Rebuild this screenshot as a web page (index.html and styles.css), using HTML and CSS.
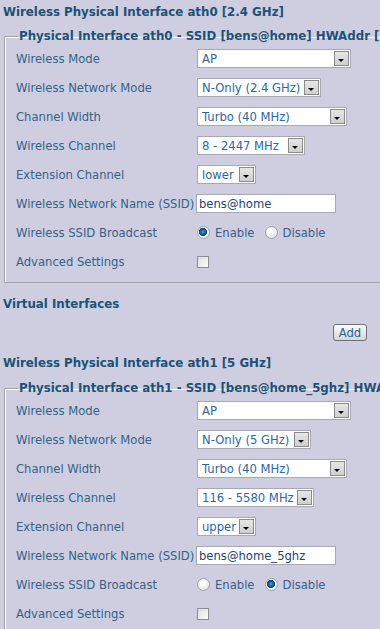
FILE: index.html
```html
<!DOCTYPE html>
<html lang="en">
<head>
    <meta charset="UTF-8">
    <meta name="viewport" content="width=device-width, initial-scale=1.0">
    <title>Wireless Physical Interface</title>
    <link rel="stylesheet" href="styles.css">
</head>
<body>
    <div class="page">
        <!-- ath0 -->
        <h2 class="section-title">Wireless Physical Interface ath0 [2.4 GHz]</h2>
        <fieldset class="iface">
            <legend>Physical Interface ath0 - SSID [bens@home] HWAddr [6C:B0:CE:1A:2F:40]</legend>
            <div class="row">
                <label>Wireless Mode</label>
                <div class="select w-mode"><select><option>AP</option></select><span class="arrow"></span></div>
            </div>
            <div class="row">
                <label>Wireless Network Mode</label>
                <div class="select w-net"><select><option>N-Only (2.4 GHz)</option></select><span class="arrow"></span></div>
            </div>
            <div class="row">
                <label>Channel Width</label>
                <div class="select w-width"><select><option>Turbo (40 MHz)</option></select><span class="arrow"></span></div>
            </div>
            <div class="row">
                <label>Wireless Channel</label>
                <div class="select w-chan"><select><option>8 - 2447 MHz</option></select><span class="arrow"></span></div>
            </div>
            <div class="row">
                <label>Extension Channel</label>
                <div class="select w-ext"><select><option>lower</option></select><span class="arrow"></span></div>
            </div>
            <div class="row">
                <label>Wireless Network Name (SSID)</label>
                <input type="text" class="text" value="bens@home">
            </div>
            <div class="row">
                <label>Wireless SSID Broadcast</label>
                <div class="radios">
                    <input type="radio" name="b0" checked><span>Enable</span>
                    <input type="radio" name="b0"><span>Disable</span>
                </div>
            </div>
            <div class="row">
                <label>Advanced Settings</label>
                <input type="checkbox" class="check">
            </div>
        </fieldset>

        <h2 class="section-title virtual">Virtual Interfaces</h2>
        <div class="add-row"><button class="btn">Add</button></div>

        <!-- ath1 -->
        <h2 class="section-title">Wireless Physical Interface ath1 [5 GHz]</h2>
        <fieldset class="iface second">
            <legend>Physical Interface ath1 - SSID [bens@home_5ghz] HWAddr [6C:B0:CE:1A:2F:41]</legend>
            <div class="row">
                <label>Wireless Mode</label>
                <div class="select w-mode"><select><option>AP</option></select><span class="arrow"></span></div>
            </div>
            <div class="row">
                <label>Wireless Network Mode</label>
                <div class="select w-net5"><select><option>N-Only (5 GHz)</option></select><span class="arrow"></span></div>
            </div>
            <div class="row">
                <label>Channel Width</label>
                <div class="select w-width"><select><option>Turbo (40 MHz)</option></select><span class="arrow"></span></div>
            </div>
            <div class="row">
                <label>Wireless Channel</label>
                <div class="select w-chan5"><select><option>116 - 5580 MHz</option></select><span class="arrow"></span></div>
            </div>
            <div class="row">
                <label>Extension Channel</label>
                <div class="select w-ext"><select><option>upper</option></select><span class="arrow"></span></div>
            </div>
            <div class="row">
                <label>Wireless Network Name (SSID)</label>
                <input type="text" class="text" value="bens@home_5ghz">
            </div>
            <div class="row">
                <label>Wireless SSID Broadcast</label>
                <div class="radios">
                    <input type="radio" name="b1"><span>Enable</span>
                    <input type="radio" name="b1" checked><span>Disable</span>
                </div>
            </div>
            <div class="row">
                <label>Advanced Settings</label>
                <input type="checkbox" class="check">
            </div>
        </fieldset>
    </div>
</body>
</html>
```

FILE: styles.css
```css
html, body {
    margin: 0;
    overflow: hidden;
}
body {
    background-color: #cecee0;
    font-family: "DejaVu Sans", Verdana, sans-serif;
    font-size: 11.6px;
    color: #33628a;
}
.page {
    padding: 0 3px;
    width: 600px;
}
.section-title {
    margin: 0;
    font-size: 11.8px;
    font-weight: bold;
    line-height: 24px;
    color: #1b5278;
}
.section-title.virtual {
    margin-top: 9px;
}
.iface {
    margin: 4px 0 0 1px;
    padding: 0 0 6px 11px;
    border-style: solid;
    border-color: #a0a0a8 #ffffff #a0a0a8 #a0a0a8;
    border-width: 1px 0 1px 1px;
    box-shadow: inset 1px 1px 0 #fff;
}
.iface.second {
    margin-top: 5px;
}
.iface legend {
    padding: 0 1px;
    margin-left: 2px;
    font-weight: bold;
    font-size: 11.8px;
    line-height: 16px;
    color: #1b5278;
    white-space: nowrap;
}
.row {
    display: flex;
    align-items: center;
    height: 29px;
}
.row label {
    width: 181px;
    flex: none;
}
.select {
    display: flex;
    height: 19px;
    box-sizing: border-box;
    border: 1px solid #a8a8b0;
    background: #fff;
}
.select select {
    flex: 1;
    appearance: none;
    -webkit-appearance: none;
    border: none;
    background: transparent;
    font-family: inherit;
    font-size: 11.6px;
    color: #2a67a8;
    padding: 0 0 0 4px;
    margin: 0;
    outline: none;
    min-width: 0;
}
.select .arrow {
    width: 15px;
    margin: 1px;
    box-sizing: border-box;
    border: 1px solid #8a8a8a;
    background: linear-gradient(#e6e6e6, #cfcfcf);
    position: relative;
}
.select .arrow::after {
    content: "";
    position: absolute;
    left: 3px;
    top: 7px;
    border-left: 3.5px solid transparent;
    border-right: 3.5px solid transparent;
    border-top: 3px solid #000;
}
.w-mode { width: 154px; }
.w-net { width: 124px; }
.w-net5 { width: 114px; }
.w-width { width: 150px; }
.w-chan { width: 108px; }
.w-chan5 { width: 117px; }
.w-ext { width: 59px; }
.text {
    margin: 0 0 0 -1px;
    width: 140px;
    height: 19px;
    box-sizing: border-box;
    border: 1px solid #a8a8b0;
    padding: 0 0 0 2px;
    font-family: inherit;
    font-size: 11.6px;
    color: #1d4672;
    outline: none;
}
.radios {
    display: flex;
    align-items: center;
}
.radios span {
    margin: 0 10px 0 5px;
}
.radios input,
.check {
    appearance: none;
    -webkit-appearance: none;
    margin: 0;
    width: 12px;
    height: 12px;
    box-sizing: border-box;
}
.radios input {
    width: 13px;
    height: 13px;
    border-radius: 50%;
    border: 1px solid #9aa4ae;
    background: radial-gradient(circle at 40% 35%, #ffffff 20%, #d4d4d8 100%);
}
.radios input:checked {
    background: radial-gradient(circle at 45% 45%, #4aa0e0 0, #0b5a9a 32%, #08406e 44%, #ffffff 52%, #d4d4d8 100%);
}
.check {
    border: 1px solid #8c8c94;
    background: linear-gradient(135deg, #dcdcdc, #ffffff);
}
.add-row {
    display: flex;
    justify-content: flex-end;
    width: 364px;
    margin-top: 8px;
}
.btn {
    height: 17px;
    width: 34px;
    padding: 0;
    font-family: inherit;
    font-size: 11.6px;
    color: #2262a2;
    border: 1px solid #707078;
    border-radius: 3px;
    background: linear-gradient(#fafafa, #e4e4e4 60%, #d6d6d6);
}
.section-title.virtual + .add-row + .section-title {
    margin-top: 10px;
}
```
